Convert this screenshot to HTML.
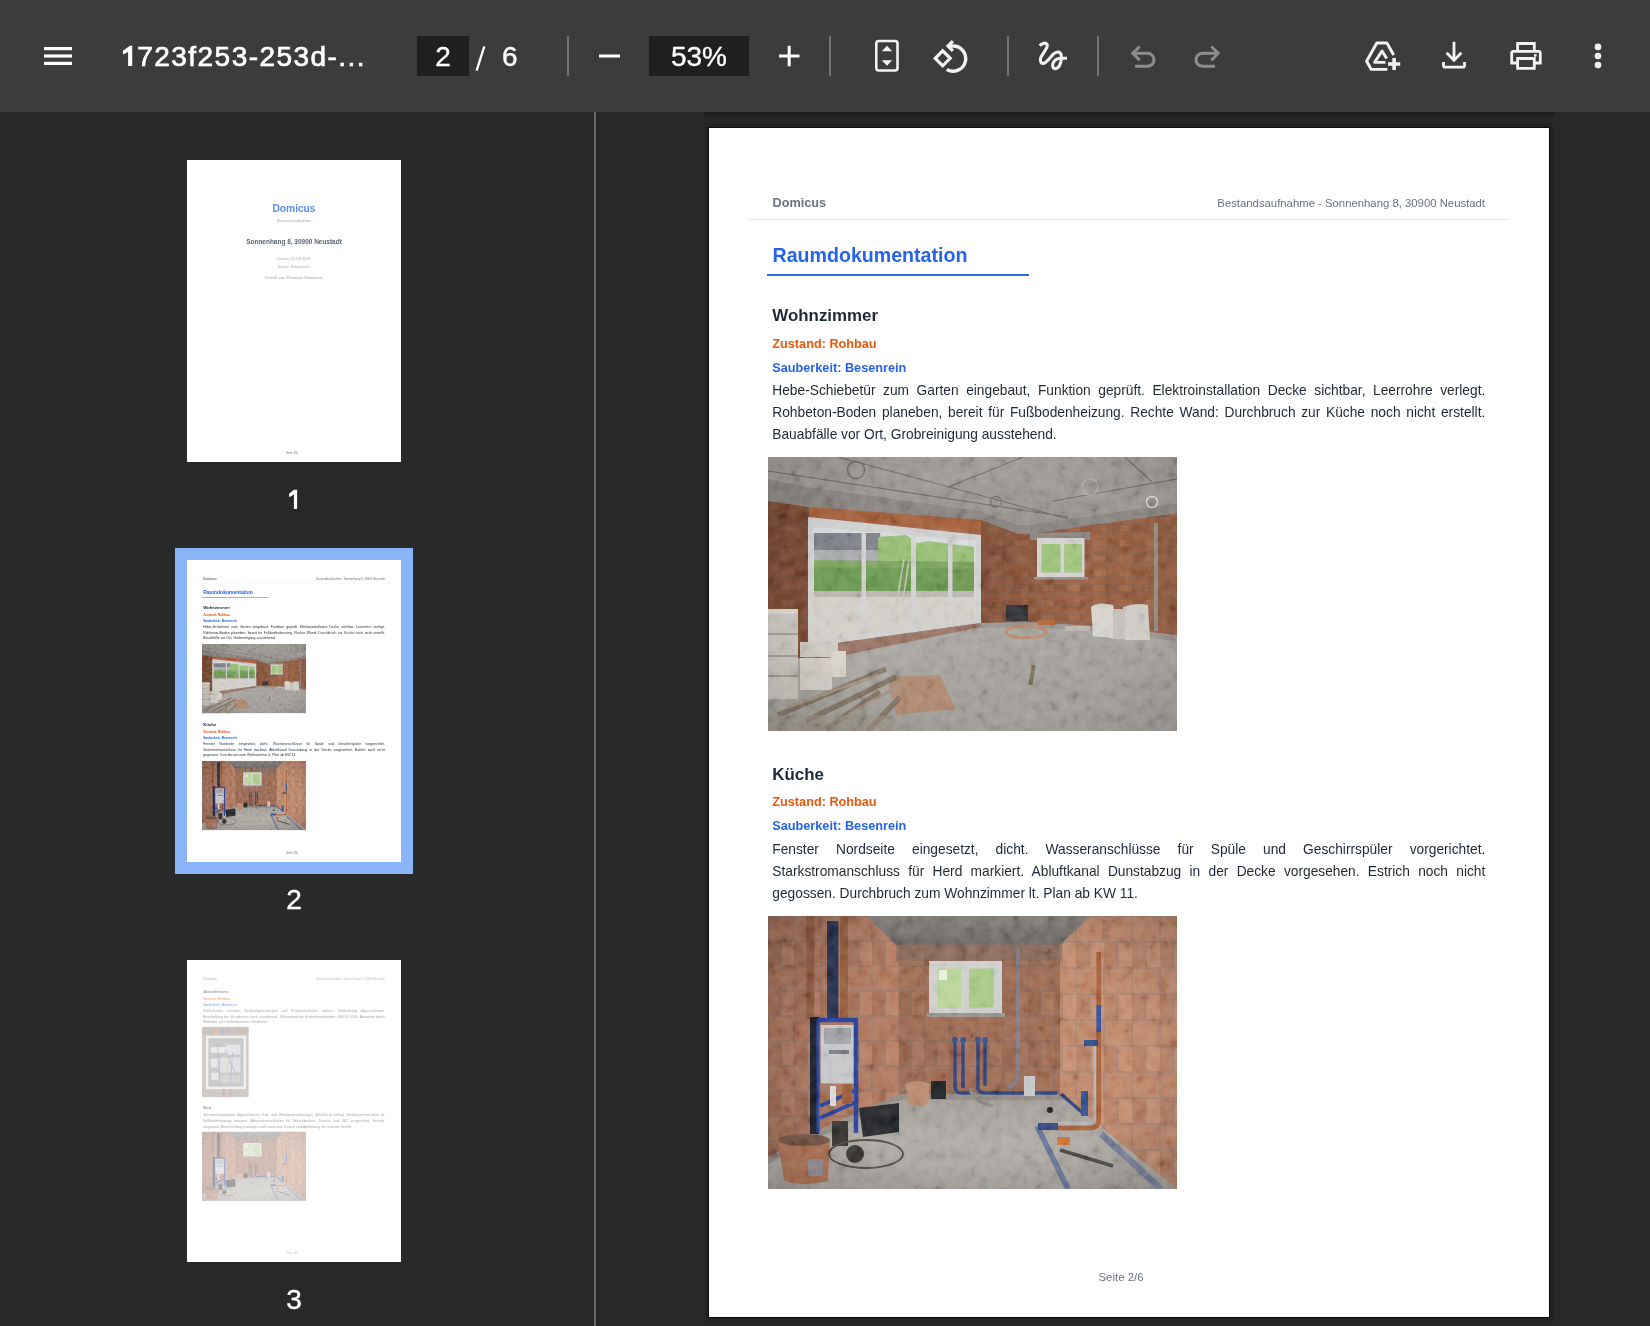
<!DOCTYPE html>
<html><head><meta charset="utf-8">
<style>
html,body{margin:0;padding:0;}
body{width:1650px;height:1326px;overflow:hidden;position:relative;background:#282828;font-family:"Liberation Sans", sans-serif;}
.t{position:absolute;white-space:nowrap;font-family:"Liberation Sans", sans-serif;}
.r{position:absolute;}
.ph{position:absolute;overflow:hidden;}
.ph svg{display:block;}
#tb{position:absolute;left:0;top:0;width:1650px;height:112px;background:#3c3c3c;}
#sb{position:absolute;left:0;top:112px;width:594px;height:1214px;background:#28292b;}
#div{position:absolute;left:594px;top:112px;width:2px;height:1214px;background:#676767;}
.page{position:absolute;width:840px;height:1188px;background:#fff;overflow:hidden;}
.thumb{position:absolute;left:187px;width:214px;height:302px;overflow:hidden;background:#fff;filter:blur(0.3px);}
.thumb .page{left:0;top:0;transform:scale(0.254762);transform-origin:0 0;}
.num{position:absolute;left:0;width:588px;text-align:center;font-size:28px;line-height:28px;color:#fff;-webkit-text-stroke:0.4px #fff;}
</style></head><body>
<div id="tb"><svg width="1650" height="112" viewBox="0 0 1650 112" style="position:absolute;left:0;top:0">
<g fill="#ffffff">
<rect x="44" y="47" width="28" height="3.2"/>
<rect x="44" y="54.4" width="28" height="3.2"/>
<rect x="44" y="61.8" width="28" height="3.2"/>
</g>
<path d="M122.7 50.9 L129.8 45.8 H132.2 V66 H128.1 V51.9 L123.3 54.6 Z" fill="#ffffff"/><text x="137.3" y="66" font-family="Liberation Sans" font-size="28" fill="#ffffff" stroke="#ffffff" stroke-width="0.7" letter-spacing="1.45">723f253-253d-...</text>
<rect x="417" y="36" width="52" height="40" fill="#1f1f1f"/>
<text x="443" y="66" font-family="Liberation Sans" font-size="28" fill="#ffffff" stroke="#ffffff" stroke-width="0.35" text-anchor="middle">2</text>
<path d="M484.3 46.3 L476.6 70.6" stroke="#ffffff" stroke-width="2.3"/>
<text x="502" y="66" font-family="Liberation Sans" font-size="28" fill="#ffffff" stroke="#ffffff" stroke-width="0.35">6</text>
<g fill="#77736f">
<rect x="567" y="36" width="2" height="40"/>
<rect x="829" y="36" width="2" height="40"/>
<rect x="1007" y="36" width="2" height="40"/>
<rect x="1097" y="36" width="2" height="40"/>
</g>
<rect x="599" y="54.5" width="21" height="3" fill="#ffffff"/>
<rect x="649" y="36" width="100" height="40" fill="#1f1f1f"/>
<text x="699" y="66" font-family="Liberation Sans" font-size="28" fill="#ffffff" stroke="#ffffff" stroke-width="0.35" text-anchor="middle">53%</text>
<g fill="#ffffff"><rect x="779" y="54.5" width="20.5" height="3"/><rect x="787.7" y="45.8" width="3" height="20.5"/></g>
<g fill="none" stroke="#f2f2f2" stroke-width="2.6">
<rect x="876.3" y="41" width="21.2" height="29.5" rx="2.5"/>
<path d="M935.2 58.3 L942.7 50.8 L950.2 58.3 L942.7 65.8 Z" stroke-width="3.2"/>
<path d="M949 46 H952.6 A12.6 12.6 0 1 1 946.8 69.5" stroke-width="3.4"/>
<path d="M952.9 41.2 L948 46 L952.9 50.8" stroke-width="3.2"/>
<path d="M1039.6 45.6 C1042 43.6 1046 41.6 1047.2 44.6 C1048.3 48 1042 54 1040.8 57.5 C1039.6 61 1041 64.2 1044 63.2 C1047.3 62 1050.5 57 1053.3 54.2 C1056.3 51.2 1060.3 51 1061.2 55 C1062 59 1060.5 66 1057.2 68 C1054 70 1051.8 67 1052.8 64 C1054 60.6 1057 58.3 1060.5 58.3 H1067" stroke-width="3.1" stroke-linecap="butt"/>
</g>
<g fill="#f2f2f2">
<path d="M881.8 51.2 L887 45.8 L892.2 51.2 Z"/>
<path d="M881.8 60.2 L887 65.8 L892.2 60.2 Z"/>
</g>
<g fill="none" stroke="#8d8d8f" stroke-width="3">
<path d="M1139.7 46.5 L1132.8 53.3 L1139.7 60.2"/>
<path d="M1132.8 53.3 H1147.5 A6.5 6.5 0 0 1 1147.5 66.3 H1135"/>
<path d="M1211.4 46.5 L1218.2 53.3 L1211.4 60.2"/>
<path d="M1218.2 53.3 H1202.5 A6.5 6.5 0 0 0 1202.5 66.3 H1215"/>
</g>
<g fill="none" stroke="#f2f2f2" stroke-width="2.8">
<path d="M1454 41.8 V60"/>
<path d="M1446.6 52.8 L1454 60.2 L1461.4 52.8"/>
<path d="M1443.5 62 V65.5 Q1443.5 67.2 1445.2 67.2 H1462.8 Q1464.5 67.2 1464.5 65.5 V62"/>
<path d="M1517.6 50 V43.5 H1534.3 V50"/>
<path d="M1517.6 63 H1511.7 V53 Q1511.7 51.3 1513.4 51.3 H1538.6 Q1540.3 51.3 1540.3 53 V63 H1534.3"/>
<path d="M1517.6 58.5 H1534.3 V68.3 H1517.6 Z"/>
<path d="M1393.7 55 L1386.9 43 H1376.8 L1366.6 61.3 L1371.3 69.4 H1387.4" stroke-width="2.9" stroke-linejoin="round"/>
<path d="M1386.7 58.6 L1382 51 L1374.6 62.4 H1385.4" stroke-width="2.9" stroke-linejoin="round"/>
<path d="M1388 64 H1400.2 M1394.1 58 V70" stroke-width="3.6"/>
</g>
<circle cx="1535.3" cy="55.5" r="1.4" fill="#f2f2f2"/>
<g fill="#f2f2f2"><circle cx="1598" cy="46.9" r="3.3"/><circle cx="1598" cy="56" r="3.3"/><circle cx="1598" cy="65.1" r="3.3"/></g>
</svg>
</div>
<div id="sb">
</div>
<div id="div"></div>
<div class="r" style="left:704px;top:112px;width:850px;height:7px;background:linear-gradient(#1b1b1b,#1f1f1f 45%,#282828)"></div>
<div class="page" style="left:709px;top:128px;height:1189px;box-shadow:0 0 0 1px rgba(0,0,0,0.6),0 0 2px 4px rgba(0,0,0,0.16)">
<div class="t" style="left:63.5px;top:68.85px;font-size:12.7px;line-height:12.7px;color:#6b7280;font-weight:bold;">Domicus</div>
<div class="t" style="right:64px;top:70.00px;font-size:11.34px;line-height:11.34px;color:#6b7280">Bestandsaufnahme - Sonnenhang 8, 30900 Neustadt</div>
<div class="r" style="left:39px;top:90.5px;width:761px;height:1.3px;background:#dce8fb"></div>
<div class="t" style="left:63.5px;top:118.21px;font-size:19.6px;line-height:19.6px;color:#2563eb;font-weight:bold;">Raumdokumentation</div>
<div class="r" style="left:58px;top:145.5px;width:262px;height:2.4px;background:#2f6ae6"></div>
<div class="t" style="left:63.3px;top:180.09px;font-size:16.9px;line-height:16.9px;color:#1f2937;font-weight:bold;">Wohnzimmer</div>
<div class="t" style="left:63.3px;top:210.15px;font-size:12.7px;line-height:12.7px;color:#ea580c;font-weight:bold;">Zustand: Rohbau</div>
<div class="t" style="left:63.3px;top:234.15px;font-size:12.7px;line-height:12.7px;color:#2563eb;font-weight:bold;">Sauberkeit: Besenrein</div>
<div class="t" style="left:63.3px;top:255.95px;width:713px;font-size:13.76px;line-height:13.76px;color:#1f2937;text-align:justify;text-align-last:justify;">Hebe-Schiebetür zum Garten eingebaut, Funktion geprüft. Elektroinstallation Decke sichtbar, Leerrohre verlegt.</div>
<div class="t" style="left:63.3px;top:277.95px;width:713px;font-size:13.76px;line-height:13.76px;color:#1f2937;text-align:justify;text-align-last:justify;">Rohbeton-Boden planeben, bereit für Fußbodenheizung. Rechte Wand: Durchbruch zur Küche noch nicht erstellt.</div>
<div class="t" style="left:63.3px;top:299.95px;width:713px;font-size:13.76px;line-height:13.76px;color:#1f2937;text-align:left;">Bauabfälle vor Ort, Grobreinigung ausstehend.</div>
<div class="ph" style="left:59px;top:329px;width:409px;height:274px"><svg width="409" height="274" viewBox="0 0 409 274">
<defs>
<pattern id="b1" width="26" height="15" patternUnits="userSpaceOnUse"><rect width="26" height="15" fill="#946a56"/><rect x="0.7" y="0.7" width="24.6" height="6.3" fill="#a6694b"/><rect x="-12.3" y="8" width="24.6" height="6.3" fill="#9d6346"/><rect x="13.7" y="8" width="24.6" height="6.3" fill="#ad7050"/></pattern><linearGradient id="rw1" x1="0" y1="0" x2="1" y2="0"><stop offset="0" stop-color="#2a1408" stop-opacity="0.28"/><stop offset="0.5" stop-color="#2a1408" stop-opacity="0.08"/><stop offset="1" stop-color="#2a1408" stop-opacity="0.15"/></linearGradient>
<linearGradient id="ce1" x1="0" y1="0" x2="0" y2="1"><stop offset="0" stop-color="#a29e99"/><stop offset="1" stop-color="#96918c"/></linearGradient>
<linearGradient id="fl1" x1="0" y1="0" x2="0.3" y2="1"><stop offset="0" stop-color="#aeaba6"/><stop offset="0.5" stop-color="#b0ada8"/><stop offset="1" stop-color="#a19e99"/></linearGradient>
<radialGradient id="vig1" cx="0.55" cy="0.5" r="0.75"><stop offset="0.6" stop-color="#000" stop-opacity="0"/><stop offset="1" stop-color="#000" stop-opacity="0.15"/></radialGradient>
<filter id="nz1" x="0" y="0" width="100%" height="100%"><feTurbulence type="fractalNoise" baseFrequency="0.09" numOctaves="3" seed="1"/><feColorMatrix type="matrix" values="0.9 0 0 0 -0.16  0.9 0 0 0 -0.16  0.9 0 0 0 -0.16  0 0 0 0 1"/></filter></defs>
<rect width="409" height="274" fill="url(#fl1)"/>
<!-- brick walls -->
<polygon points="0,28 41,36 213,62 251,76 261,76 409,56 409,178 325,169 260,165 213,166 77,195 41,200 0,205" fill="url(#b1)"/>
<polygon points="0,28 41,36 41,200 0,205" fill="#4a2818" opacity="0.45"/><polygon points="213,62 251,76 261,76 409,56 409,178 325,169 260,165 213,166" fill="url(#rw1)"/>
<!-- ceiling -->
<polygon points="0,0 409,0 409,46 261,68 251,68 213,54 41,30 0,22" fill="url(#ce1)"/>
<!-- ring beam gray -->
<polygon points="0,22 41,30 213,54 251,68 261,68 409,46 409,56 261,77 251,77 213,63 41,50 0,44" fill="#8a8580"/>
<polygon points="41,50 213,63 213,76 41,60" fill="#a5623f"/>
<g stroke="#5f5b57" stroke-width="1.1" fill="none" opacity="0.7">
<path d="M0 14 L300 60"/><path d="M70 0 L300 62"/><path d="M180 30 L255 0"/><path d="M285 44 L409 22"/><path d="M357 0 L384 25"/>
<circle cx="88" cy="13" r="8.5" stroke-width="1.6"/><circle cx="228" cy="45" r="5.5"/>
</g>
<circle cx="322" cy="30" r="8" stroke="#b5b0aa" stroke-width="1.2" fill="none"/>
<circle cx="384" cy="45" r="5.5" stroke="#e0ddd8" stroke-width="1.4" fill="none"/>
<!-- far right opening -->
<rect x="386" y="66" width="4" height="108" fill="#8f8a84"/>
<rect x="390" y="76" width="19" height="98" fill="#8e5a42"/>
<!-- door frame -->
<polygon points="40,60 213,78 213,166 40,190" fill="#cfcfd0"/>
<polygon points="45.5,70 208,84 208,163 45.5,184" fill="#d5d3cf"/>
<polygon points="45.5,70 208,84 208,104 45.5,104" fill="#d7dadd"/>
<polygon points="46,76 112,76 114,93 46,93" fill="#80838b"/>
<polygon points="46,93 112,93 112,104 46,104" fill="#a9abae"/>
<polygon points="110,80 138,78 150,86 160,84 206,90 206,118 110,116" fill="#98bf78"/>
<polygon points="46,103 206,105 206,134 46,134" fill="#7aa45e"/>
<polygon points="46,110 206,112 206,134 46,134" fill="#6f9a55"/>
<polygon points="46,134 206,134 206,140 46,140" fill="#b9b6ae"/>
<polygon points="46,140 206,140 206,163 46,184" fill="#d2cec8"/>
<path d="M128 150 L136 102 M134 150 L141 102" stroke="#c9c5bd" stroke-width="1.5"/>
<rect x="93.5" y="68" width="4.5" height="120" fill="#d2d1d2"/>
<rect x="143" y="72" width="5" height="104" fill="#d2d1d2"/>
<rect x="180" y="78" width="4.5" height="92" fill="#d2d1d2"/>
<polygon points="40,190 213,166 213,170 77,198 40,204" fill="#9a7868"/>
<!-- small window -->
<polygon points="262,76 322,75 322,83 262,83" fill="#8e8984"/>
<rect x="269" y="81" width="47.5" height="40" fill="#d3d2d0"/>
<rect x="273.5" y="87" width="19" height="28.5" fill="#9cc27a"/>
<rect x="296" y="87" width="18" height="28.5" fill="#a3c682"/>
<rect x="266" y="120" width="54" height="2.5" fill="#9a908a"/>
<!-- floor shadow at wall -->
<polygon points="213,166 260,165 325,169 409,178 409,184 325,174 260,170 213,171" fill="#8f8984" opacity="0.6"/>
<!-- sacks -->
<path d="M323 150 Q330 144 345 148 L352 182 L325 179 Z" fill="#d6d3cd"/>
<path d="M355 150 Q368 145 380 148 L382 183 L357 183 Z" fill="#cecac4"/>
<rect x="345" y="152" width="12" height="30" fill="#c4c0b9"/>
<rect x="238" y="148" width="22" height="16" fill="#35363b"/>
<ellipse cx="258" cy="175" rx="20" ry="6" fill="none" stroke="#bb8a70" stroke-width="3"/>
<rect x="270" y="163" width="17" height="5" fill="#b06a40"/>
<rect x="297" y="169" width="25" height="5" fill="#b9b4ad"/>
<!-- blocks -->
<rect x="0" y="152" width="30" height="90" fill="#c9c4bc"/>
<rect x="0" y="152" width="30" height="5" fill="#dad6ce"/>
<rect x="0" y="176" width="30" height="2" fill="#a29d95"/>
<rect x="0" y="198" width="30" height="2" fill="#a29d95"/>
<rect x="0" y="218" width="30" height="2" fill="#a29d95"/>
<rect x="32" y="185" width="38" height="15" fill="#cdc8c0"/>
<rect x="32" y="201" width="32" height="32" fill="#d2cdc5"/>
<rect x="63" y="194" width="15" height="26" fill="#d7d2ca"/>
<polygon points="119,220 172,218 188,252 128,258" fill="#b08a72"/>
<g stroke="#857666" stroke-width="5.5" stroke-linecap="butt">
<path d="M10 258 L118 212"/><path d="M38 264 L128 220"/><path d="M58 272 L112 235"/><path d="M100 274 L132 240"/>
</g>
<g stroke="#a49383" stroke-width="3"><path d="M20 250 L110 218"/><path d="M70 264 L135 226"/></g>
<rect x="0" y="258" width="125" height="16" fill="#9d9184" opacity="0.55"/>
<rect x="262" y="208" width="4" height="20" fill="#807060" transform="rotate(10 264 218)"/>
<rect width="409" height="274" fill="url(#vig1)"/>
<rect width="409" height="274" filter="url(#nz1)" style="mix-blend-mode:soft-light" opacity="0.4"/></svg>
</div>
<div class="t" style="left:63.3px;top:639.09px;font-size:16.9px;line-height:16.9px;color:#1f2937;font-weight:bold;">Küche</div>
<div class="t" style="left:63.3px;top:668.14px;font-size:12.7px;line-height:12.7px;color:#ea580c;font-weight:bold;">Zustand: Rohbau</div>
<div class="t" style="left:63.3px;top:692.14px;font-size:12.7px;line-height:12.7px;color:#2563eb;font-weight:bold;">Sauberkeit: Besenrein</div>
<div class="t" style="left:63.3px;top:714.95px;width:713px;font-size:13.76px;line-height:13.76px;color:#1f2937;text-align:justify;text-align-last:justify;">Fenster Nordseite eingesetzt, dicht. Wasseranschlüsse für Spüle und Geschirrspüler vorgerichtet.</div>
<div class="t" style="left:63.3px;top:736.95px;width:713px;font-size:13.76px;line-height:13.76px;color:#1f2937;text-align:justify;text-align-last:justify;">Starkstromanschluss für Herd markiert. Abluftkanal Dunstabzug in der Decke vorgesehen. Estrich noch nicht</div>
<div class="t" style="left:63.3px;top:758.95px;width:713px;font-size:13.76px;line-height:13.76px;color:#1f2937;text-align:left;">gegossen. Durchbruch zum Wohnzimmer lt. Plan ab KW 11.</div>
<div class="ph" style="left:59px;top:788px;width:409px;height:274px"><svg width="409" height="273" viewBox="0 0 409 273">
<defs>
<pattern id="b2" width="26" height="50" patternUnits="userSpaceOnUse"><rect width="26" height="50" fill="#9c7a6a"/><rect x="0.8" y="0.8" width="24.4" height="23.4" fill="#b47c62"/><rect x="-12.2" y="25.8" width="24.4" height="23.4" fill="#ac755c"/><rect x="13.8" y="25.8" width="24.4" height="23.4" fill="#ba8368"/></pattern>
<pattern id="b3" width="28" height="52" patternUnits="userSpaceOnUse"><rect width="28" height="52" fill="#a88574"/><rect x="0.8" y="0.8" width="26.4" height="24.4" fill="#c08a6e"/><rect x="-13.2" y="26.8" width="26.4" height="24.4" fill="#b88368"/><rect x="14.8" y="26.8" width="26.4" height="24.4" fill="#c69074"/></pattern>
<linearGradient id="ce2" x1="0" y1="0" x2="0" y2="1"><stop offset="0" stop-color="#8a847e"/><stop offset="1" stop-color="#6e6a66"/></linearGradient>
<linearGradient id="fl2" x1="0" y1="0" x2="0" y2="1"><stop offset="0" stop-color="#a29d97"/><stop offset="0.5" stop-color="#b0aba5"/><stop offset="1" stop-color="#a8a39d"/></linearGradient>
<linearGradient id="lw2" x1="0" y1="0" x2="1" y2="0"><stop offset="0" stop-color="#000" stop-opacity="0.12"/><stop offset="1" stop-color="#000" stop-opacity="0"/></linearGradient>
<radialGradient id="vig2" cx="0.5" cy="0.5" r="0.75"><stop offset="0.55" stop-color="#000" stop-opacity="0"/><stop offset="1" stop-color="#000" stop-opacity="0.2"/></radialGradient>
<filter id="nz2" x="0" y="0" width="100%" height="100%"><feTurbulence type="fractalNoise" baseFrequency="0.09" numOctaves="3" seed="2"/><feColorMatrix type="matrix" values="0.9 0 0 0 -0.16  0.9 0 0 0 -0.16  0.9 0 0 0 -0.16  0 0 0 0 1"/></filter></defs>
<rect width="409" height="273" fill="url(#b2)"/>
<polygon points="322,0 409,0 409,273 292,178 292,27" fill="url(#b3)"/>
<polygon points="0,0 99,0 131,27 131,178 0,241" fill="url(#lw2)"/>
<polygon points="131,27 292,27 292,178 131,178" fill="#4a3024" opacity="0.2"/>
<polygon points="99,0 322,0 292,29 128,29" fill="url(#ce2)"/>
<polygon points="128,27 294,27 294,45 128,45" fill="#7d6b60" opacity="0.55"/>
<polygon points="0,241 42,218 131,178 293,178 409,273 0,273" fill="url(#fl2)"/>
<polygon points="0,241 42,218 131,178 293,178 300,184 131,184 46,224 0,248" fill="#857a72" opacity="0.45"/>
<rect x="161" y="45" width="73" height="54" fill="#cfcfcd"/>
<rect x="169.5" y="52.5" width="23.5" height="39" fill="#b9d59a"/>
<rect x="201" y="52.5" width="25" height="39" fill="#a9cb88"/>
<rect x="171" y="54" width="8" height="10" fill="#e6efe0"/>
<rect x="159" y="97" width="78" height="4" fill="#9c948e"/>
<rect x="38.5" y="0" width="8" height="103" fill="#8e5a40"/>
<rect x="59" y="5" width="11.5" height="98" fill="#2c3552"/>
<rect x="72" y="0" width="8" height="103" fill="#94603f"/>
<rect x="42" y="101" width="9" height="117" fill="#1f2430"/>
<path d="M49 104 H88 V217" fill="none" stroke="#2b449e" stroke-width="4.5"/>
<path d="M50 104 V217" stroke="#2b449e" stroke-width="3"/>
<rect x="52.7" y="109" width="32.8" height="58.5" fill="#c6c7c8"/>
<rect x="56" y="112" width="27" height="16" fill="#a4a5a8"/>
<rect x="61" y="134" width="20" height="4" fill="#7d7f84"/>
<path d="M52 190 L88 174 M52 202 L88 186" stroke="#2b449e" stroke-width="4"/>
<rect x="62" y="170" width="6" height="20" fill="#d8d8d8"/>
<rect x="74" y="168" width="10" height="20" fill="#a0603c"/>
<rect x="64" y="205" width="16" height="25" fill="#3b3835"/>
<g stroke="#34457e" stroke-width="3.5" fill="none">
<path d="M187 125 V170 Q187 177 194 177 H205"/><path d="M195 125 V172"/><path d="M210 125 V172 Q210 177 217 177 H289"/><path d="M217 125 V170"/>
<path d="M293 178 L316 198"/>
</g>
<g fill="#3a4f8a"><circle cx="187" cy="124" r="3"/><circle cx="195" cy="124" r="3"/><circle cx="210" cy="124" r="3"/><circle cx="217" cy="124" r="3"/></g>
<path d="M250 32 V158 Q250 168 240 172" stroke="#7a8294" stroke-width="3" fill="none"/>
<path d="M202 172 Q204 186 225 190" stroke="#8e8a86" stroke-width="3" fill="none"/>
<path d="M330.7 36 V204 Q330.7 212 322 212 H284" stroke="#a8633c" stroke-width="4.5" fill="none"/>
<rect x="328.5" y="89" width="4.5" height="27" fill="#2f52a8"/>
<path d="M326.8 128 V200 Q326.8 207 320 207 H290" stroke="#b6b6b8" stroke-width="2.5" fill="none"/>
<rect x="316" y="124" width="14" height="6" fill="#2f4b8a"/>
<rect x="313" y="175" width="7" height="25" fill="#34508f"/>
<path d="M269 210 L300 273" stroke="#6b7898" stroke-width="5.5"/>
<path d="M333 218 L393 273" stroke="#7c86a0" stroke-width="6.5"/>
<rect x="270" y="207" width="20" height="7" fill="#384c86"/>
<rect x="256" y="160" width="11" height="20" fill="#c9c9c9"/>
<path d="M10 223 Q36 216 62 223 L60 265 Q36 271 16 265 Z" fill="#b07558"/>
<ellipse cx="36" cy="224" rx="26" ry="6" fill="#7a5a4a"/>
<rect x="40" y="243" width="15" height="17" fill="#8f98b0" opacity="0.7"/>
<polygon points="91,192 131,187 131,216 95,221" fill="#2b2c30"/>
<path d="M137.5 168 Q150 162 162 168 L160 188 Q149 192 140 188 Z" fill="#b98b72"/>
<rect x="163" y="165" width="15" height="18" fill="#26272a"/>
<ellipse cx="98" cy="238" rx="37" ry="14" fill="none" stroke="#55524e" stroke-width="1.8"/>
<circle cx="87" cy="238" r="9" fill="#3d3b38"/>
<path d="M292 234 L345 250" stroke="#4e4b48" stroke-width="3.5"/>
<rect x="289" y="221" width="13" height="8" fill="#d0753e"/>
<circle cx="282" cy="194" r="3" fill="#2a2a2a"/>
<rect width="409" height="273" fill="url(#vig2)"/>
<rect width="409" height="273" filter="url(#nz2)" style="mix-blend-mode:soft-light" opacity="0.4"/></svg>
</div>
<div class="t" style="left:0;width:824px;text-align:center;top:1143.95px;font-size:11.4px;line-height:11.4px;color:#6b7280">Seite 2/6</div>
</div>
<div class="thumb" style="top:160px"><div class="page"><div class="t" style="left:0;width:840px;text-align:center;top:170.25px;font-size:40px;line-height:40px;color:#5a8ff0;font-weight:bold">Domicus</div>
<div class="t" style="left:0;width:840px;text-align:center;top:230.25px;font-size:15.5px;line-height:15.5px;color:#a3a8b0">Bestandsaufnahme</div>
<div class="t" style="left:0;width:840px;text-align:center;top:308.22px;font-size:25.4px;line-height:25.4px;color:#5b6270;font-weight:bold">Sonnenhang 8, 30900 Neustadt</div>
<div class="t" style="left:0;width:840px;text-align:center;top:379.41px;font-size:15.5px;line-height:15.5px;color:#a3a8b0">Datum: 01.03.2026</div>
<div class="t" style="left:0;width:840px;text-align:center;top:410.81px;font-size:15.5px;line-height:15.5px;color:#a3a8b0">Status: Eingereicht</div>
<div class="t" style="left:0;width:840px;text-align:center;top:453.99px;font-size:15.5px;line-height:15.5px;color:#a3a8b0">Erstellt von: Frantisek Bobobeski</div>
<div class="t" style="left:0;width:824px;text-align:center;top:1143.65px;font-size:11.64px;line-height:11.64px;color:#6b7280">Seite 1/6</div></div></div>
<div class="r" style="left:175px;top:548px;width:238px;height:326px;background:#8ab4f8"></div>
<div class="thumb" style="top:560px"><div class="page"><div class="t" style="left:63.5px;top:68.85px;font-size:12.7px;line-height:12.7px;color:#6b7280;font-weight:bold;">Domicus</div>
<div class="t" style="right:64px;top:70.00px;font-size:11.34px;line-height:11.34px;color:#6b7280">Bestandsaufnahme - Sonnenhang 8, 30900 Neustadt</div>
<div class="r" style="left:39px;top:90.5px;width:761px;height:1.3px;background:#dce8fb"></div>
<div class="t" style="left:63.5px;top:118.21px;font-size:19.6px;line-height:19.6px;color:#2563eb;font-weight:bold;">Raumdokumentation</div>
<div class="r" style="left:58px;top:145.5px;width:262px;height:2.4px;background:#2f6ae6"></div>
<div class="t" style="left:63.3px;top:180.09px;font-size:16.9px;line-height:16.9px;color:#1f2937;font-weight:bold;">Wohnzimmer</div>
<div class="t" style="left:63.3px;top:210.15px;font-size:12.7px;line-height:12.7px;color:#ea580c;font-weight:bold;">Zustand: Rohbau</div>
<div class="t" style="left:63.3px;top:234.15px;font-size:12.7px;line-height:12.7px;color:#2563eb;font-weight:bold;">Sauberkeit: Besenrein</div>
<div class="t" style="left:63.3px;top:255.95px;width:713px;font-size:13.76px;line-height:13.76px;color:#1f2937;text-align:justify;text-align-last:justify;">Hebe-Schiebetür zum Garten eingebaut, Funktion geprüft. Elektroinstallation Decke sichtbar, Leerrohre verlegt.</div>
<div class="t" style="left:63.3px;top:277.95px;width:713px;font-size:13.76px;line-height:13.76px;color:#1f2937;text-align:justify;text-align-last:justify;">Rohbeton-Boden planeben, bereit für Fußbodenheizung. Rechte Wand: Durchbruch zur Küche noch nicht erstellt.</div>
<div class="t" style="left:63.3px;top:299.95px;width:713px;font-size:13.76px;line-height:13.76px;color:#1f2937;text-align:left;">Bauabfälle vor Ort, Grobreinigung ausstehend.</div>
<div class="ph" style="left:59px;top:329px;width:409px;height:274px"><svg width="409" height="274" viewBox="0 0 409 274">
<defs>
<pattern id="b1" width="26" height="15" patternUnits="userSpaceOnUse"><rect width="26" height="15" fill="#946a56"/><rect x="0.7" y="0.7" width="24.6" height="6.3" fill="#a6694b"/><rect x="-12.3" y="8" width="24.6" height="6.3" fill="#9d6346"/><rect x="13.7" y="8" width="24.6" height="6.3" fill="#ad7050"/></pattern><linearGradient id="rw1" x1="0" y1="0" x2="1" y2="0"><stop offset="0" stop-color="#2a1408" stop-opacity="0.28"/><stop offset="0.5" stop-color="#2a1408" stop-opacity="0.08"/><stop offset="1" stop-color="#2a1408" stop-opacity="0.15"/></linearGradient>
<linearGradient id="ce1" x1="0" y1="0" x2="0" y2="1"><stop offset="0" stop-color="#a29e99"/><stop offset="1" stop-color="#96918c"/></linearGradient>
<linearGradient id="fl1" x1="0" y1="0" x2="0.3" y2="1"><stop offset="0" stop-color="#aeaba6"/><stop offset="0.5" stop-color="#b0ada8"/><stop offset="1" stop-color="#a19e99"/></linearGradient>
<radialGradient id="vig1" cx="0.55" cy="0.5" r="0.75"><stop offset="0.6" stop-color="#000" stop-opacity="0"/><stop offset="1" stop-color="#000" stop-opacity="0.15"/></radialGradient>
<filter id="nz1" x="0" y="0" width="100%" height="100%"><feTurbulence type="fractalNoise" baseFrequency="0.09" numOctaves="3" seed="1"/><feColorMatrix type="matrix" values="0.9 0 0 0 -0.16  0.9 0 0 0 -0.16  0.9 0 0 0 -0.16  0 0 0 0 1"/></filter></defs>
<rect width="409" height="274" fill="url(#fl1)"/>
<!-- brick walls -->
<polygon points="0,28 41,36 213,62 251,76 261,76 409,56 409,178 325,169 260,165 213,166 77,195 41,200 0,205" fill="url(#b1)"/>
<polygon points="0,28 41,36 41,200 0,205" fill="#4a2818" opacity="0.45"/><polygon points="213,62 251,76 261,76 409,56 409,178 325,169 260,165 213,166" fill="url(#rw1)"/>
<!-- ceiling -->
<polygon points="0,0 409,0 409,46 261,68 251,68 213,54 41,30 0,22" fill="url(#ce1)"/>
<!-- ring beam gray -->
<polygon points="0,22 41,30 213,54 251,68 261,68 409,46 409,56 261,77 251,77 213,63 41,50 0,44" fill="#8a8580"/>
<polygon points="41,50 213,63 213,76 41,60" fill="#a5623f"/>
<g stroke="#5f5b57" stroke-width="1.1" fill="none" opacity="0.7">
<path d="M0 14 L300 60"/><path d="M70 0 L300 62"/><path d="M180 30 L255 0"/><path d="M285 44 L409 22"/><path d="M357 0 L384 25"/>
<circle cx="88" cy="13" r="8.5" stroke-width="1.6"/><circle cx="228" cy="45" r="5.5"/>
</g>
<circle cx="322" cy="30" r="8" stroke="#b5b0aa" stroke-width="1.2" fill="none"/>
<circle cx="384" cy="45" r="5.5" stroke="#e0ddd8" stroke-width="1.4" fill="none"/>
<!-- far right opening -->
<rect x="386" y="66" width="4" height="108" fill="#8f8a84"/>
<rect x="390" y="76" width="19" height="98" fill="#8e5a42"/>
<!-- door frame -->
<polygon points="40,60 213,78 213,166 40,190" fill="#cfcfd0"/>
<polygon points="45.5,70 208,84 208,163 45.5,184" fill="#d5d3cf"/>
<polygon points="45.5,70 208,84 208,104 45.5,104" fill="#d7dadd"/>
<polygon points="46,76 112,76 114,93 46,93" fill="#80838b"/>
<polygon points="46,93 112,93 112,104 46,104" fill="#a9abae"/>
<polygon points="110,80 138,78 150,86 160,84 206,90 206,118 110,116" fill="#98bf78"/>
<polygon points="46,103 206,105 206,134 46,134" fill="#7aa45e"/>
<polygon points="46,110 206,112 206,134 46,134" fill="#6f9a55"/>
<polygon points="46,134 206,134 206,140 46,140" fill="#b9b6ae"/>
<polygon points="46,140 206,140 206,163 46,184" fill="#d2cec8"/>
<path d="M128 150 L136 102 M134 150 L141 102" stroke="#c9c5bd" stroke-width="1.5"/>
<rect x="93.5" y="68" width="4.5" height="120" fill="#d2d1d2"/>
<rect x="143" y="72" width="5" height="104" fill="#d2d1d2"/>
<rect x="180" y="78" width="4.5" height="92" fill="#d2d1d2"/>
<polygon points="40,190 213,166 213,170 77,198 40,204" fill="#9a7868"/>
<!-- small window -->
<polygon points="262,76 322,75 322,83 262,83" fill="#8e8984"/>
<rect x="269" y="81" width="47.5" height="40" fill="#d3d2d0"/>
<rect x="273.5" y="87" width="19" height="28.5" fill="#9cc27a"/>
<rect x="296" y="87" width="18" height="28.5" fill="#a3c682"/>
<rect x="266" y="120" width="54" height="2.5" fill="#9a908a"/>
<!-- floor shadow at wall -->
<polygon points="213,166 260,165 325,169 409,178 409,184 325,174 260,170 213,171" fill="#8f8984" opacity="0.6"/>
<!-- sacks -->
<path d="M323 150 Q330 144 345 148 L352 182 L325 179 Z" fill="#d6d3cd"/>
<path d="M355 150 Q368 145 380 148 L382 183 L357 183 Z" fill="#cecac4"/>
<rect x="345" y="152" width="12" height="30" fill="#c4c0b9"/>
<rect x="238" y="148" width="22" height="16" fill="#35363b"/>
<ellipse cx="258" cy="175" rx="20" ry="6" fill="none" stroke="#bb8a70" stroke-width="3"/>
<rect x="270" y="163" width="17" height="5" fill="#b06a40"/>
<rect x="297" y="169" width="25" height="5" fill="#b9b4ad"/>
<!-- blocks -->
<rect x="0" y="152" width="30" height="90" fill="#c9c4bc"/>
<rect x="0" y="152" width="30" height="5" fill="#dad6ce"/>
<rect x="0" y="176" width="30" height="2" fill="#a29d95"/>
<rect x="0" y="198" width="30" height="2" fill="#a29d95"/>
<rect x="0" y="218" width="30" height="2" fill="#a29d95"/>
<rect x="32" y="185" width="38" height="15" fill="#cdc8c0"/>
<rect x="32" y="201" width="32" height="32" fill="#d2cdc5"/>
<rect x="63" y="194" width="15" height="26" fill="#d7d2ca"/>
<polygon points="119,220 172,218 188,252 128,258" fill="#b08a72"/>
<g stroke="#857666" stroke-width="5.5" stroke-linecap="butt">
<path d="M10 258 L118 212"/><path d="M38 264 L128 220"/><path d="M58 272 L112 235"/><path d="M100 274 L132 240"/>
</g>
<g stroke="#a49383" stroke-width="3"><path d="M20 250 L110 218"/><path d="M70 264 L135 226"/></g>
<rect x="0" y="258" width="125" height="16" fill="#9d9184" opacity="0.55"/>
<rect x="262" y="208" width="4" height="20" fill="#807060" transform="rotate(10 264 218)"/>
<rect width="409" height="274" fill="url(#vig1)"/>
<rect width="409" height="274" filter="url(#nz1)" style="mix-blend-mode:soft-light" opacity="0.4"/></svg>
</div>
<div class="t" style="left:63.3px;top:639.09px;font-size:16.9px;line-height:16.9px;color:#1f2937;font-weight:bold;">Küche</div>
<div class="t" style="left:63.3px;top:668.14px;font-size:12.7px;line-height:12.7px;color:#ea580c;font-weight:bold;">Zustand: Rohbau</div>
<div class="t" style="left:63.3px;top:692.14px;font-size:12.7px;line-height:12.7px;color:#2563eb;font-weight:bold;">Sauberkeit: Besenrein</div>
<div class="t" style="left:63.3px;top:714.95px;width:713px;font-size:13.76px;line-height:13.76px;color:#1f2937;text-align:justify;text-align-last:justify;">Fenster Nordseite eingesetzt, dicht. Wasseranschlüsse für Spüle und Geschirrspüler vorgerichtet.</div>
<div class="t" style="left:63.3px;top:736.95px;width:713px;font-size:13.76px;line-height:13.76px;color:#1f2937;text-align:justify;text-align-last:justify;">Starkstromanschluss für Herd markiert. Abluftkanal Dunstabzug in der Decke vorgesehen. Estrich noch nicht</div>
<div class="t" style="left:63.3px;top:758.95px;width:713px;font-size:13.76px;line-height:13.76px;color:#1f2937;text-align:left;">gegossen. Durchbruch zum Wohnzimmer lt. Plan ab KW 11.</div>
<div class="ph" style="left:59px;top:788px;width:409px;height:274px"><svg width="409" height="273" viewBox="0 0 409 273">
<defs>
<pattern id="b2" width="26" height="50" patternUnits="userSpaceOnUse"><rect width="26" height="50" fill="#9c7a6a"/><rect x="0.8" y="0.8" width="24.4" height="23.4" fill="#b47c62"/><rect x="-12.2" y="25.8" width="24.4" height="23.4" fill="#ac755c"/><rect x="13.8" y="25.8" width="24.4" height="23.4" fill="#ba8368"/></pattern>
<pattern id="b3" width="28" height="52" patternUnits="userSpaceOnUse"><rect width="28" height="52" fill="#a88574"/><rect x="0.8" y="0.8" width="26.4" height="24.4" fill="#c08a6e"/><rect x="-13.2" y="26.8" width="26.4" height="24.4" fill="#b88368"/><rect x="14.8" y="26.8" width="26.4" height="24.4" fill="#c69074"/></pattern>
<linearGradient id="ce2" x1="0" y1="0" x2="0" y2="1"><stop offset="0" stop-color="#8a847e"/><stop offset="1" stop-color="#6e6a66"/></linearGradient>
<linearGradient id="fl2" x1="0" y1="0" x2="0" y2="1"><stop offset="0" stop-color="#a29d97"/><stop offset="0.5" stop-color="#b0aba5"/><stop offset="1" stop-color="#a8a39d"/></linearGradient>
<linearGradient id="lw2" x1="0" y1="0" x2="1" y2="0"><stop offset="0" stop-color="#000" stop-opacity="0.12"/><stop offset="1" stop-color="#000" stop-opacity="0"/></linearGradient>
<radialGradient id="vig2" cx="0.5" cy="0.5" r="0.75"><stop offset="0.55" stop-color="#000" stop-opacity="0"/><stop offset="1" stop-color="#000" stop-opacity="0.2"/></radialGradient>
<filter id="nz2" x="0" y="0" width="100%" height="100%"><feTurbulence type="fractalNoise" baseFrequency="0.09" numOctaves="3" seed="2"/><feColorMatrix type="matrix" values="0.9 0 0 0 -0.16  0.9 0 0 0 -0.16  0.9 0 0 0 -0.16  0 0 0 0 1"/></filter></defs>
<rect width="409" height="273" fill="url(#b2)"/>
<polygon points="322,0 409,0 409,273 292,178 292,27" fill="url(#b3)"/>
<polygon points="0,0 99,0 131,27 131,178 0,241" fill="url(#lw2)"/>
<polygon points="131,27 292,27 292,178 131,178" fill="#4a3024" opacity="0.2"/>
<polygon points="99,0 322,0 292,29 128,29" fill="url(#ce2)"/>
<polygon points="128,27 294,27 294,45 128,45" fill="#7d6b60" opacity="0.55"/>
<polygon points="0,241 42,218 131,178 293,178 409,273 0,273" fill="url(#fl2)"/>
<polygon points="0,241 42,218 131,178 293,178 300,184 131,184 46,224 0,248" fill="#857a72" opacity="0.45"/>
<rect x="161" y="45" width="73" height="54" fill="#cfcfcd"/>
<rect x="169.5" y="52.5" width="23.5" height="39" fill="#b9d59a"/>
<rect x="201" y="52.5" width="25" height="39" fill="#a9cb88"/>
<rect x="171" y="54" width="8" height="10" fill="#e6efe0"/>
<rect x="159" y="97" width="78" height="4" fill="#9c948e"/>
<rect x="38.5" y="0" width="8" height="103" fill="#8e5a40"/>
<rect x="59" y="5" width="11.5" height="98" fill="#2c3552"/>
<rect x="72" y="0" width="8" height="103" fill="#94603f"/>
<rect x="42" y="101" width="9" height="117" fill="#1f2430"/>
<path d="M49 104 H88 V217" fill="none" stroke="#2b449e" stroke-width="4.5"/>
<path d="M50 104 V217" stroke="#2b449e" stroke-width="3"/>
<rect x="52.7" y="109" width="32.8" height="58.5" fill="#c6c7c8"/>
<rect x="56" y="112" width="27" height="16" fill="#a4a5a8"/>
<rect x="61" y="134" width="20" height="4" fill="#7d7f84"/>
<path d="M52 190 L88 174 M52 202 L88 186" stroke="#2b449e" stroke-width="4"/>
<rect x="62" y="170" width="6" height="20" fill="#d8d8d8"/>
<rect x="74" y="168" width="10" height="20" fill="#a0603c"/>
<rect x="64" y="205" width="16" height="25" fill="#3b3835"/>
<g stroke="#34457e" stroke-width="3.5" fill="none">
<path d="M187 125 V170 Q187 177 194 177 H205"/><path d="M195 125 V172"/><path d="M210 125 V172 Q210 177 217 177 H289"/><path d="M217 125 V170"/>
<path d="M293 178 L316 198"/>
</g>
<g fill="#3a4f8a"><circle cx="187" cy="124" r="3"/><circle cx="195" cy="124" r="3"/><circle cx="210" cy="124" r="3"/><circle cx="217" cy="124" r="3"/></g>
<path d="M250 32 V158 Q250 168 240 172" stroke="#7a8294" stroke-width="3" fill="none"/>
<path d="M202 172 Q204 186 225 190" stroke="#8e8a86" stroke-width="3" fill="none"/>
<path d="M330.7 36 V204 Q330.7 212 322 212 H284" stroke="#a8633c" stroke-width="4.5" fill="none"/>
<rect x="328.5" y="89" width="4.5" height="27" fill="#2f52a8"/>
<path d="M326.8 128 V200 Q326.8 207 320 207 H290" stroke="#b6b6b8" stroke-width="2.5" fill="none"/>
<rect x="316" y="124" width="14" height="6" fill="#2f4b8a"/>
<rect x="313" y="175" width="7" height="25" fill="#34508f"/>
<path d="M269 210 L300 273" stroke="#6b7898" stroke-width="5.5"/>
<path d="M333 218 L393 273" stroke="#7c86a0" stroke-width="6.5"/>
<rect x="270" y="207" width="20" height="7" fill="#384c86"/>
<rect x="256" y="160" width="11" height="20" fill="#c9c9c9"/>
<path d="M10 223 Q36 216 62 223 L60 265 Q36 271 16 265 Z" fill="#b07558"/>
<ellipse cx="36" cy="224" rx="26" ry="6" fill="#7a5a4a"/>
<rect x="40" y="243" width="15" height="17" fill="#8f98b0" opacity="0.7"/>
<polygon points="91,192 131,187 131,216 95,221" fill="#2b2c30"/>
<path d="M137.5 168 Q150 162 162 168 L160 188 Q149 192 140 188 Z" fill="#b98b72"/>
<rect x="163" y="165" width="15" height="18" fill="#26272a"/>
<ellipse cx="98" cy="238" rx="37" ry="14" fill="none" stroke="#55524e" stroke-width="1.8"/>
<circle cx="87" cy="238" r="9" fill="#3d3b38"/>
<path d="M292 234 L345 250" stroke="#4e4b48" stroke-width="3.5"/>
<rect x="289" y="221" width="13" height="8" fill="#d0753e"/>
<circle cx="282" cy="194" r="3" fill="#2a2a2a"/>
<rect width="409" height="273" fill="url(#vig2)"/>
<rect width="409" height="273" filter="url(#nz2)" style="mix-blend-mode:soft-light" opacity="0.4"/></svg>
</div>
<div class="t" style="left:0;width:824px;text-align:center;top:1143.95px;font-size:11.4px;line-height:11.4px;color:#6b7280">Seite 2/6</div></div></div>
<div class="thumb" style="top:960px"><div class="page" style="opacity:0.45"><div class="t" style="left:63.5px;top:68.85px;font-size:12.7px;line-height:12.7px;color:#6b7280;font-weight:bold;">Domicus</div>
<div class="t" style="right:64px;top:70.00px;font-size:11.34px;line-height:11.34px;color:#6b7280">Bestandsaufnahme - Sonnenhang 8, 30900 Neustadt</div>
<div class="r" style="left:39px;top:90.5px;width:761px;height:1.3px;background:#dce8fb"></div>
<div class="t" style="left:63.3px;top:115.49px;font-size:16.9px;line-height:16.9px;color:#1f2937;font-weight:bold;">Abstellraum</div>
<div class="t" style="left:63.3px;top:147.15px;font-size:12.7px;line-height:12.7px;color:#ea580c;font-weight:bold;">Zustand: Rohbau</div>
<div class="t" style="left:63.3px;top:172.15px;font-size:12.7px;line-height:12.7px;color:#2563eb;font-weight:bold;">Sauberkeit: Besenrein</div>
<div class="t" style="left:63.3px;top:193.55px;width:713px;font-size:13.76px;line-height:13.76px;color:#1f2937;text-align:justify;text-align-last:justify;">Zählerkasten montiert, Sicherungsautomaten und FI-Schutzschalter verbaut. Verdrahtung abgeschlossen.</div>
<div class="t" style="left:63.3px;top:215.25px;width:713px;font-size:13.76px;line-height:13.76px;color:#1f2937;text-align:justify;text-align-last:justify;">Beschriftung der Stromkreise noch ausstehend. Zählerstand bei Erstinbetriebnahme: 000000 kWh. Abnahme durch</div>
<div class="t" style="left:63.3px;top:236.95px;width:713px;font-size:13.76px;line-height:13.76px;color:#1f2937;text-align:left;">Elektriker vor Inbetriebnahme erforderlich.</div>
<div class="ph" style="left:59px;top:261.8px;width:183px;height:278px"><svg width="184" height="278" viewBox="0 0 184 278">
<rect width="184" height="278" fill="#9c8b82"/>
<rect x="0" y="0" width="184" height="30" fill="#8f7c72"/>
<g stroke-width="6"><path d="M55 0 V32" stroke="#d08050"/><path d="M80 0 V32" stroke="#5a6a90"/><path d="M100 0 V32" stroke="#6a7090"/><path d="M120 0 V32" stroke="#b08070"/></g>
<rect x="15" y="35" width="158" height="210" fill="#dcdcdc"/>
<rect x="25" y="45" width="138" height="190" fill="#8e8e90"/>
<rect x="35" y="80" width="60" height="22" fill="#d8d8d8"/>
<rect x="95" y="70" width="55" height="40" fill="#c8c8ca"/>
<rect x="35" y="125" width="30" height="35" fill="#d0d0d0"/>
<rect x="70" y="120" width="80" height="60" fill="#bdbdbf"/>
<rect x="35" y="180" width="30" height="30" fill="#c8c8c8"/>
<rect x="70" y="190" width="80" height="30" fill="#a8a8aa"/>
<path d="M60 60 L70 230 M120 100 L110 230 M90 90 L140 200" stroke="#5a6a9a" stroke-width="3" fill="none"/>
<path d="M110 110 L100 170" stroke="#c87850" stroke-width="3"/>
<g stroke-width="6"><path d="M85 245 V278" stroke="#5a6a90"/><path d="M98 245 V278" stroke="#d08050"/><path d="M112 245 V278" stroke="#707070"/></g>
</svg>
</div>
<div class="t" style="left:63.3px;top:573.19px;font-size:16.9px;line-height:16.9px;color:#1f2937;font-weight:bold;">Bad</div>
<div class="t" style="left:63.3px;top:603.20px;width:713px;font-size:13.76px;line-height:13.76px;color:#1f2937;text-align:justify;text-align-last:justify;">Vorwand-Installation abgeschlossen. Kalt- und Warmwasserleitungen (Mehrfach) verlegt. Heizkörperanschluss für</div>
<div class="t" style="left:63.3px;top:624.90px;width:713px;font-size:13.76px;line-height:13.76px;color:#1f2937;text-align:justify;text-align-last:justify;">Fußbodenheizung montiert. Abwasseranschlüsse für Waschbecken, Dusche und WC vorgerichtet. Fenster</div>
<div class="t" style="left:63.3px;top:646.60px;width:713px;font-size:13.76px;line-height:13.76px;color:#1f2937;text-align:left;">eingesetzt. Bruchstellung Leitungen steht noch aus. Estrich und Abdichtung als nächster Schritt.</div>
<div class="ph" style="left:59px;top:673.2px;width:409px;height:272px"><svg width="409" height="273" viewBox="0 0 409 273">
<defs>
<pattern id="b2" width="26" height="50" patternUnits="userSpaceOnUse"><rect width="26" height="50" fill="#9c7a6a"/><rect x="0.8" y="0.8" width="24.4" height="23.4" fill="#b47c62"/><rect x="-12.2" y="25.8" width="24.4" height="23.4" fill="#ac755c"/><rect x="13.8" y="25.8" width="24.4" height="23.4" fill="#ba8368"/></pattern>
<pattern id="b3" width="28" height="52" patternUnits="userSpaceOnUse"><rect width="28" height="52" fill="#a88574"/><rect x="0.8" y="0.8" width="26.4" height="24.4" fill="#c08a6e"/><rect x="-13.2" y="26.8" width="26.4" height="24.4" fill="#b88368"/><rect x="14.8" y="26.8" width="26.4" height="24.4" fill="#c69074"/></pattern>
<linearGradient id="ce2" x1="0" y1="0" x2="0" y2="1"><stop offset="0" stop-color="#8a847e"/><stop offset="1" stop-color="#6e6a66"/></linearGradient>
<linearGradient id="fl2" x1="0" y1="0" x2="0" y2="1"><stop offset="0" stop-color="#a29d97"/><stop offset="0.5" stop-color="#b0aba5"/><stop offset="1" stop-color="#a8a39d"/></linearGradient>
<linearGradient id="lw2" x1="0" y1="0" x2="1" y2="0"><stop offset="0" stop-color="#000" stop-opacity="0.12"/><stop offset="1" stop-color="#000" stop-opacity="0"/></linearGradient>
<radialGradient id="vig2" cx="0.5" cy="0.5" r="0.75"><stop offset="0.55" stop-color="#000" stop-opacity="0"/><stop offset="1" stop-color="#000" stop-opacity="0.2"/></radialGradient>
<filter id="nz2" x="0" y="0" width="100%" height="100%"><feTurbulence type="fractalNoise" baseFrequency="0.09" numOctaves="3" seed="2"/><feColorMatrix type="matrix" values="0.9 0 0 0 -0.16  0.9 0 0 0 -0.16  0.9 0 0 0 -0.16  0 0 0 0 1"/></filter></defs>
<rect width="409" height="273" fill="url(#b2)"/>
<polygon points="322,0 409,0 409,273 292,178 292,27" fill="url(#b3)"/>
<polygon points="0,0 99,0 131,27 131,178 0,241" fill="url(#lw2)"/>
<polygon points="131,27 292,27 292,178 131,178" fill="#4a3024" opacity="0.2"/>
<polygon points="99,0 322,0 292,29 128,29" fill="url(#ce2)"/>
<polygon points="128,27 294,27 294,45 128,45" fill="#7d6b60" opacity="0.55"/>
<polygon points="0,241 42,218 131,178 293,178 409,273 0,273" fill="url(#fl2)"/>
<polygon points="0,241 42,218 131,178 293,178 300,184 131,184 46,224 0,248" fill="#857a72" opacity="0.45"/>
<rect x="161" y="45" width="73" height="54" fill="#cfcfcd"/>
<rect x="169.5" y="52.5" width="23.5" height="39" fill="#b9d59a"/>
<rect x="201" y="52.5" width="25" height="39" fill="#a9cb88"/>
<rect x="171" y="54" width="8" height="10" fill="#e6efe0"/>
<rect x="159" y="97" width="78" height="4" fill="#9c948e"/>
<rect x="38.5" y="0" width="8" height="103" fill="#8e5a40"/>
<rect x="59" y="5" width="11.5" height="98" fill="#2c3552"/>
<rect x="72" y="0" width="8" height="103" fill="#94603f"/>
<rect x="42" y="101" width="9" height="117" fill="#1f2430"/>
<path d="M49 104 H88 V217" fill="none" stroke="#2b449e" stroke-width="4.5"/>
<path d="M50 104 V217" stroke="#2b449e" stroke-width="3"/>
<rect x="52.7" y="109" width="32.8" height="58.5" fill="#c6c7c8"/>
<rect x="56" y="112" width="27" height="16" fill="#a4a5a8"/>
<rect x="61" y="134" width="20" height="4" fill="#7d7f84"/>
<path d="M52 190 L88 174 M52 202 L88 186" stroke="#2b449e" stroke-width="4"/>
<rect x="62" y="170" width="6" height="20" fill="#d8d8d8"/>
<rect x="74" y="168" width="10" height="20" fill="#a0603c"/>
<rect x="64" y="205" width="16" height="25" fill="#3b3835"/>
<g stroke="#34457e" stroke-width="3.5" fill="none">
<path d="M187 125 V170 Q187 177 194 177 H205"/><path d="M195 125 V172"/><path d="M210 125 V172 Q210 177 217 177 H289"/><path d="M217 125 V170"/>
<path d="M293 178 L316 198"/>
</g>
<g fill="#3a4f8a"><circle cx="187" cy="124" r="3"/><circle cx="195" cy="124" r="3"/><circle cx="210" cy="124" r="3"/><circle cx="217" cy="124" r="3"/></g>
<path d="M250 32 V158 Q250 168 240 172" stroke="#7a8294" stroke-width="3" fill="none"/>
<path d="M202 172 Q204 186 225 190" stroke="#8e8a86" stroke-width="3" fill="none"/>
<path d="M330.7 36 V204 Q330.7 212 322 212 H284" stroke="#a8633c" stroke-width="4.5" fill="none"/>
<rect x="328.5" y="89" width="4.5" height="27" fill="#2f52a8"/>
<path d="M326.8 128 V200 Q326.8 207 320 207 H290" stroke="#b6b6b8" stroke-width="2.5" fill="none"/>
<rect x="316" y="124" width="14" height="6" fill="#2f4b8a"/>
<rect x="313" y="175" width="7" height="25" fill="#34508f"/>
<path d="M269 210 L300 273" stroke="#6b7898" stroke-width="5.5"/>
<path d="M333 218 L393 273" stroke="#7c86a0" stroke-width="6.5"/>
<rect x="270" y="207" width="20" height="7" fill="#384c86"/>
<rect x="256" y="160" width="11" height="20" fill="#c9c9c9"/>
<path d="M10 223 Q36 216 62 223 L60 265 Q36 271 16 265 Z" fill="#b07558"/>
<ellipse cx="36" cy="224" rx="26" ry="6" fill="#7a5a4a"/>
<rect x="40" y="243" width="15" height="17" fill="#8f98b0" opacity="0.7"/>
<polygon points="91,192 131,187 131,216 95,221" fill="#2b2c30"/>
<path d="M137.5 168 Q150 162 162 168 L160 188 Q149 192 140 188 Z" fill="#b98b72"/>
<rect x="163" y="165" width="15" height="18" fill="#26272a"/>
<ellipse cx="98" cy="238" rx="37" ry="14" fill="none" stroke="#55524e" stroke-width="1.8"/>
<circle cx="87" cy="238" r="9" fill="#3d3b38"/>
<path d="M292 234 L345 250" stroke="#4e4b48" stroke-width="3.5"/>
<rect x="289" y="221" width="13" height="8" fill="#d0753e"/>
<circle cx="282" cy="194" r="3" fill="#2a2a2a"/>
<rect width="409" height="273" fill="url(#vig2)"/>
<rect width="409" height="273" filter="url(#nz2)" style="mix-blend-mode:soft-light" opacity="0.4"/></svg>
</div>
<div class="t" style="left:0;width:824px;text-align:center;top:1143.65px;font-size:11.64px;line-height:11.64px;color:#6b7280">Seite 3/6</div></div></div>
<svg style="position:absolute;left:0;top:0" width="400" height="520"><path d="M289 493.7 L293.9 489.8 H297.1 V509 H293.9 V494.4 L289.3 497.2 Z" fill="#ffffff"/></svg>
<div class="num" style="top:885.8px">2</div>
<div class="num" style="top:1285.8px">3</div>
</body></html>
